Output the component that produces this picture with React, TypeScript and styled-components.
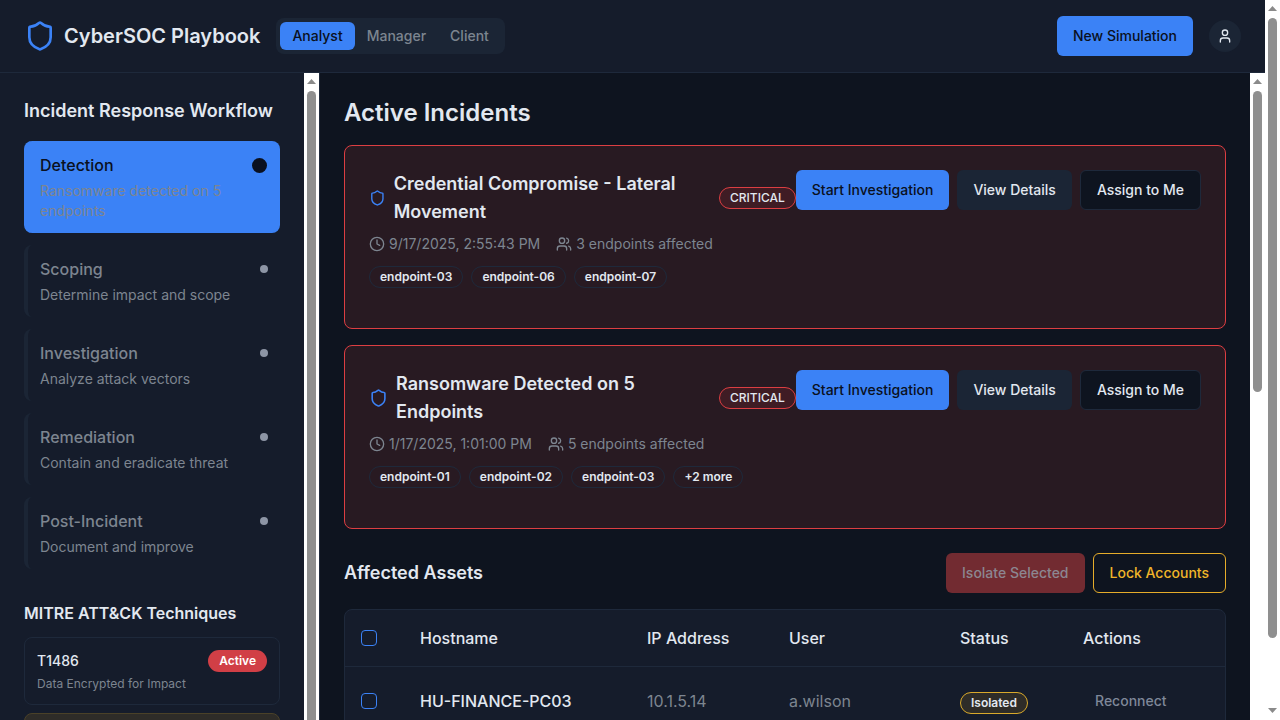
import React from "react";
import styled, { createGlobalStyle } from "styled-components";
import { Clock, Shield, User, Users } from "lucide-react";

type Incident = {
  title: string;
  time: string;
  affected: number;
  endpoints: string[];
};

type Asset = {
  hostname: string;
  ip: string;
  user: string;
  status: string;
  action: string;
};

const steps = [
  { name: "Detection", text: "Ransomware detected on 5 endpoints", active: true },
  { name: "Scoping", text: "Determine impact and scope", active: false },
  { name: "Investigation", text: "Analyze attack vectors", active: false },
  { name: "Remediation", text: "Contain and eradicate threat", active: false },
  { name: "Post-Incident", text: "Document and improve", active: false },
];

const incidents: Incident[] = [
  {
    title: "Credential Compromise - Lateral Movement",
    time: "9/17/2025, 2:55:43 PM",
    affected: 3,
    endpoints: ["endpoint-03", "endpoint-06", "endpoint-07"],
  },
  {
    title: "Ransomware Detected on 5 Endpoints",
    time: "1/17/2025, 1:01:00 PM",
    affected: 5,
    endpoints: ["endpoint-01", "endpoint-02", "endpoint-03", "+2 more"],
  },
];

const assets: Asset[] = [
  { hostname: "HU-FINANCE-PC03", ip: "10.1.5.14", user: "a.wilson", status: "Isolated", action: "Reconnect" },
];

// the picture has classic scrollbars, the headless browser hides real ones
const Scrollbar = ({ thumb, end }: { thumb: number; end?: boolean }) => (
  <Track>
    <TrackButton>
      <svg width="15" height="18" viewBox="0 0 15 18">
        <path d="M3 11l4.5-5 4.5 5z" fill="#8a8a8a" />
      </svg>
    </TrackButton>
    <Thumb $height={thumb} />
    {end && (
      <TrackButton $end>
        <svg width="15" height="17" viewBox="0 0 15 17">
          <path d="M3 5l4.5 5 4.5-5z" fill="#8a8a8a" />
        </svg>
      </TrackButton>
    )}
  </Track>
);

const App = () => {
  return (
    <Page>
      <GlobalStyle />
      <Column>
        <Header>
          <Brand>
            <Shield size={32} color="#3b82f6" />
            <BrandName>CyberSOC Playbook</BrandName>
            <RoleSwitch>
              <RoleButton $active>Analyst</RoleButton>
              <RoleButton>Manager</RoleButton>
              <RoleButton>Client</RoleButton>
            </RoleSwitch>
          </Brand>
          <HeaderActions>
            <Button $variant="primary">New Simulation</Button>
            <Avatar>
              <User size={16} />
            </Avatar>
          </HeaderActions>
        </Header>
        <Layout>
          <Sidebar>
            <SidebarBody>
              <SidebarTitle>Incident Response Workflow</SidebarTitle>
              <StepList>
                {steps.map((step) => (
                  <Step key={step.name} $active={step.active}>
                    <StepTop>
                      <StepName $active={step.active}>{step.name}</StepName>
                      <StepDot $active={step.active} />
                    </StepTop>
                    <StepText>{step.text}</StepText>
                  </Step>
                ))}
              </StepList>
              <TechniquesTitle>MITRE ATT&amp;CK Techniques</TechniquesTitle>
              <Technique>
                <TechniqueTop>
                  <TechniqueId>T1486</TechniqueId>
                  <ActiveBadge>Active</ActiveBadge>
                </TechniqueTop>
                <TechniqueName>Data Encrypted for Impact</TechniqueName>
              </Technique>
              <Technique $warning />
            </SidebarBody>
            <Scrollbar thumb={675} />
          </Sidebar>
          <Main>
            <MainBody>
              <PageTitle>Active Incidents</PageTitle>
              <IncidentList>
                {incidents.map((incident) => (
                  <IncidentCard key={incident.title}>
                    <IncidentTop>
                      <TitleRow>
                        <Shield size={20} color="#3b82f6" />
                        <IncidentTitle>{incident.title}</IncidentTitle>
                        <CriticalBadge>CRITICAL</CriticalBadge>
                      </TitleRow>
                      <CardActions>
                        <Button $variant="primary">Start Investigation</Button>
                        <Button $variant="secondary">View Details</Button>
                        <Button $variant="outline">Assign to Me</Button>
                      </CardActions>
                    </IncidentTop>
                    <Meta>
                      <MetaItem>
                        <Clock size={16} />
                        {incident.time}
                      </MetaItem>
                      <MetaItem>
                        <Users size={16} />
                        {incident.affected} endpoints affected
                      </MetaItem>
                    </Meta>
                    <Tags>
                      {incident.endpoints.map((endpoint) => (
                        <Tag key={endpoint}>{endpoint}</Tag>
                      ))}
                    </Tags>
                  </IncidentCard>
                ))}
              </IncidentList>
              <AssetsHeader>
                <AssetsTitle>Affected Assets</AssetsTitle>
                <AssetsActions>
                  <Button $variant="danger">Isolate Selected</Button>
                  <Button $variant="warning">Lock Accounts</Button>
                </AssetsActions>
              </AssetsHeader>
              <TableCard>
                <Table>
                  <colgroup>
                    <col width={59} />
                    <col width={227} />
                    <col width={142} />
                    <col width={171} />
                    <col width={123} />
                    <col width={158} />
                  </colgroup>
                  <thead>
                    <tr>
                      <Th>
                        <Check type="checkbox" />
                      </Th>
                      <Th>Hostname</Th>
                      <Th>IP Address</Th>
                      <Th>User</Th>
                      <Th>Status</Th>
                      <Th>Actions</Th>
                    </tr>
                  </thead>
                  <tbody>
                    {assets.map((asset) => (
                      <tr key={asset.hostname}>
                        <Td>
                          <Check type="checkbox" />
                        </Td>
                        <Host>{asset.hostname}</Host>
                        <Td>{asset.ip}</Td>
                        <Td>{asset.user}</Td>
                        <Td>
                          <StatusBadge>{asset.status}</StatusBadge>
                        </Td>
                        <Td>
                          <GhostButton>{asset.action}</GhostButton>
                        </Td>
                      </tr>
                    ))}
                  </tbody>
                </Table>
              </TableCard>
            </MainBody>
            <Scrollbar thumb={301} />
          </Main>
        </Layout>
      </Column>
      <Scrollbar thumb={620} end />
    </Page>
  );
};

const GlobalStyle = createGlobalStyle`
  * {
    box-sizing: border-box;
  }

  body {
    margin: 0;
    background: #0e141f;
    color: #e2e8f0;
    font-family: Inter, "Liberation Sans", sans-serif;
  }
`;

const Page = styled.div`
  display: flex;
  height: 100vh;
  overflow: hidden;
`;

const Column = styled.div`
  flex: 1;
  min-width: 0;
`;

const Track = styled.div`
  display: flex;
  flex: none;
  flex-direction: column;
  align-items: center;
  width: 15px;
  background: #fff;
`;

const TrackButton = styled.div<{ $end?: boolean }>`
  display: flex;
  flex: none;
  margin-top: ${(p) => (p.$end ? "auto" : "0")};
`;

const Thumb = styled.div<{ $height: number }>`
  flex: none;
  width: 9px;
  height: ${(p) => p.$height}px;
  border-radius: 5px;
  background: #8f8f8f;
`;

const Header = styled.header`
  display: flex;
  align-items: center;
  justify-content: space-between;
  height: 73px;
  padding: 0 24px;
  background: #151c2b;
  border-bottom: 1px solid #1e293b;
`;

const Brand = styled.div`
  display: flex;
  align-items: center;
  gap: 8px;
`;

const BrandName = styled.h1`
  margin: 0 8px 0 0;
  font-size: 20px;
  line-height: 28px;
  font-weight: 600;
  color: #e2e8f0;
`;

const RoleSwitch = styled.div`
  display: flex;
  padding: 4px;
  border-radius: 8px;
  background: #1b2535;
`;

const RoleButton = styled.button<{ $active?: boolean }>`
  height: 28px;
  padding: 0 12px;
  border: 0;
  border-radius: 6px;
  font: 500 14px/20px Inter, sans-serif;
  color: ${(p) => (p.$active ? "#0a1020" : "#7d8590")};
  background: ${(p) => (p.$active ? "#3b82f6" : "transparent")};
`;

const HeaderActions = styled.div`
  display: flex;
  align-items: center;
  gap: 16px;
`;

const buttonColors = {
  primary: "background: #3b82f6; color: #0a1020; border: 0;",
  secondary: "background: #1b2535; color: #e2e8f0; border: 0;",
  outline: "background: #0e141f; color: #e2e8f0; border: 1px solid #1e293b;",
  danger: "background: #722b31; color: #8c8690; border: 0;",
  warning: "background: transparent; color: #f0b429; border: 1px solid #e5ac2a;",
};

const Button = styled.button<{ $variant: keyof typeof buttonColors }>`
  height: 40px;
  padding: 0 16px;
  border-radius: 6px;
  white-space: nowrap;
  font: 500 14px/20px Inter, sans-serif;
  ${(p) => buttonColors[p.$variant]}
`;

const Avatar = styled.div`
  display: flex;
  align-items: center;
  justify-content: center;
  width: 32px;
  height: 32px;
  border-radius: 50%;
  color: #e2e8f0;
  background: #1b2535;
`;

const Layout = styled.div`
  display: flex;
  height: 100vh;
`;

const Sidebar = styled.aside`
  display: flex;
  flex: none;
  width: 320px;
  background: #151c2b;
  border-right: 1px solid #1e293b;
`;

const SidebarBody = styled.div`
  flex: 1;
  min-width: 0;
  padding: 24px;
  overflow: hidden;
`;

const SidebarTitle = styled.h2`
  margin: 0 0 16px;
  font-size: 18px;
  line-height: 28px;
  font-weight: 600;
`;

const StepList = styled.div`
  display: flex;
  flex-direction: column;
  gap: 12px;
`;

const Step = styled.div<{ $active: boolean }>`
  padding: 12px;
  border-left: 4px solid ${(p) => (p.$active ? "#3b82f6" : "#1b2535")};
  border-radius: 8px;
  background: ${(p) => (p.$active ? "#3b82f6" : "transparent")};
`;

const StepTop = styled.div`
  display: flex;
  align-items: center;
  justify-content: space-between;
`;

const StepName = styled.span<{ $active: boolean }>`
  font-size: 16px;
  line-height: 24px;
  font-weight: 500;
  color: ${(p) => (p.$active ? "#0a1020" : "#7d8590")};
`;

const StepDot = styled.span<{ $active: boolean }>`
  width: ${(p) => (p.$active ? "15px" : "8px")};
  height: ${(p) => (p.$active ? "15px" : "8px")};
  margin-right: ${(p) => (p.$active ? "1px" : "0")};
  border-radius: 50%;
  background: ${(p) => (p.$active ? "#0a1020" : "#8d95a5")};
`;

const StepText = styled.div`
  margin-top: 4px;
  font-size: 14px;
  line-height: 20px;
  color: #7d8590;
`;

const TechniquesTitle = styled.h3`
  margin: 32px 0 12px;
  font-size: 16px;
  line-height: 24px;
  font-weight: 600;
`;

const Technique = styled.div<{ $warning?: boolean }>`
  height: 68px;
  margin-bottom: 8px;
  padding: 12px;
  border: 1px solid ${(p) => (p.$warning ? "#4a4128" : "#1e293b")};
  border-radius: 8px;
  background: ${(p) => (p.$warning ? "#2e2c28" : "transparent")};
`;

const TechniqueTop = styled.div`
  display: flex;
  align-items: center;
  justify-content: space-between;
  height: 22px;
`;

const TechniqueId = styled.span`
  font-size: 14px;
  line-height: 20px;
  font-weight: 500;
`;

const ActiveBadge = styled.span`
  padding: 3px 11px;
  border-radius: 999px;
  font-size: 12px;
  line-height: 16px;
  font-weight: 600;
  color: #fff;
  background: #d13f46;
`;

const TechniqueName = styled.div`
  margin-top: 4px;
  font-size: 12px;
  line-height: 16px;
  color: #7d8590;
`;

const Main = styled.main`
  display: flex;
  flex: 1;
  min-width: 0;
`;

const MainBody = styled.div`
  flex: 1;
  min-width: 0;
  padding: 24px;
  overflow: hidden;
`;

const PageTitle = styled.h2`
  margin: 0 0 16px;
  font-size: 24px;
  line-height: 32px;
  font-weight: 600;
`;

const IncidentList = styled.div`
  display: flex;
  flex-direction: column;
  gap: 16px;
`;

const IncidentCard = styled.article`
  padding: 24px;
  border: 1px solid #dc3e42;
  border-radius: 8px;
  background: #281a22;
`;

const IncidentTop = styled.div`
  display: flex;
  align-items: flex-start;
`;

const TitleRow = styled.div`
  display: flex;
  flex: 1;
  align-items: center;
  gap: 8px;
  min-width: 0;
`;

const IncidentTitle = styled.h3`
  margin: 0;
  font-size: 18px;
  line-height: 28px;
  font-weight: 600;
`;

const CriticalBadge = styled.span`
  flex: none;
  padding: 2px 10px;
  border: 1px solid #dc3e42;
  border-radius: 999px;
  font-size: 12px;
  line-height: 16px;
  font-weight: 500;
  background: #3f1c24;
`;

const CardActions = styled.div`
  display: flex;
  flex: none;
  gap: 8px;
`;

const Meta = styled.div`
  display: flex;
  gap: 16px;
  margin-top: 8px;
`;

const MetaItem = styled.span`
  display: flex;
  align-items: center;
  gap: 4px;
  font-size: 14px;
  line-height: 20px;
  color: #7d8590;
`;

const Tags = styled.div`
  display: flex;
  gap: 8px;
  margin: 12px 0 16px;
`;

const Tag = styled.span`
  padding: 2px 10px;
  border: 1px solid #1e293b;
  border-radius: 999px;
  font-size: 12px;
  line-height: 16px;
  font-weight: 600;
`;

const AssetsHeader = styled.div`
  display: flex;
  align-items: center;
  justify-content: space-between;
  margin: 24px 0 16px;
`;

const AssetsTitle = styled.h3`
  margin: 0;
  font-size: 18px;
  line-height: 28px;
  font-weight: 600;
`;

const AssetsActions = styled.div`
  display: flex;
  gap: 8px;
`;

const TableCard = styled.div`
  border: 1px solid #1e293b;
  border-radius: 8px;
  background: #151c2b;
`;

const Table = styled.table`
  width: 100%;
  border-collapse: separate;
  border-spacing: 0;
  table-layout: fixed;
`;

const Th = styled.th`
  height: 57px;
  padding: 0 16px;
  border-bottom: 1px solid #1e293b;
  text-align: left;
  font-size: 16px;
  line-height: 24px;
  font-weight: 500;
`;

const Td = styled.td`
  height: 69px;
  padding: 0 16px;
  border-bottom: 1px solid #1e293b;
  font-size: 16px;
  line-height: 24px;
  color: #7d8590;
`;

const Host = styled(Td)`
  font-weight: 500;
  color: #e2e8f0;
`;

const Check = styled.input`
  display: block;
  width: 16px;
  height: 16px;
  margin: 0;
  appearance: none;
  border: 1px solid #3b82f6;
  border-radius: 4px;
  background: transparent;
`;

const StatusBadge = styled.span`
  display: inline-block;
  padding: 2px 10px;
  border: 1px solid #d9a92b;
  border-radius: 999px;
  font-size: 12px;
  line-height: 16px;
  font-weight: 600;
  color: #e2e8f0;
  background: #2e2c28;
`;

const GhostButton = styled.button`
  height: 36px;
  padding: 0 12px;
  border: 0;
  border-radius: 6px;
  font: 500 14px/20px Inter, sans-serif;
  color: #7f8899;
  background: transparent;
`;

export default App;
